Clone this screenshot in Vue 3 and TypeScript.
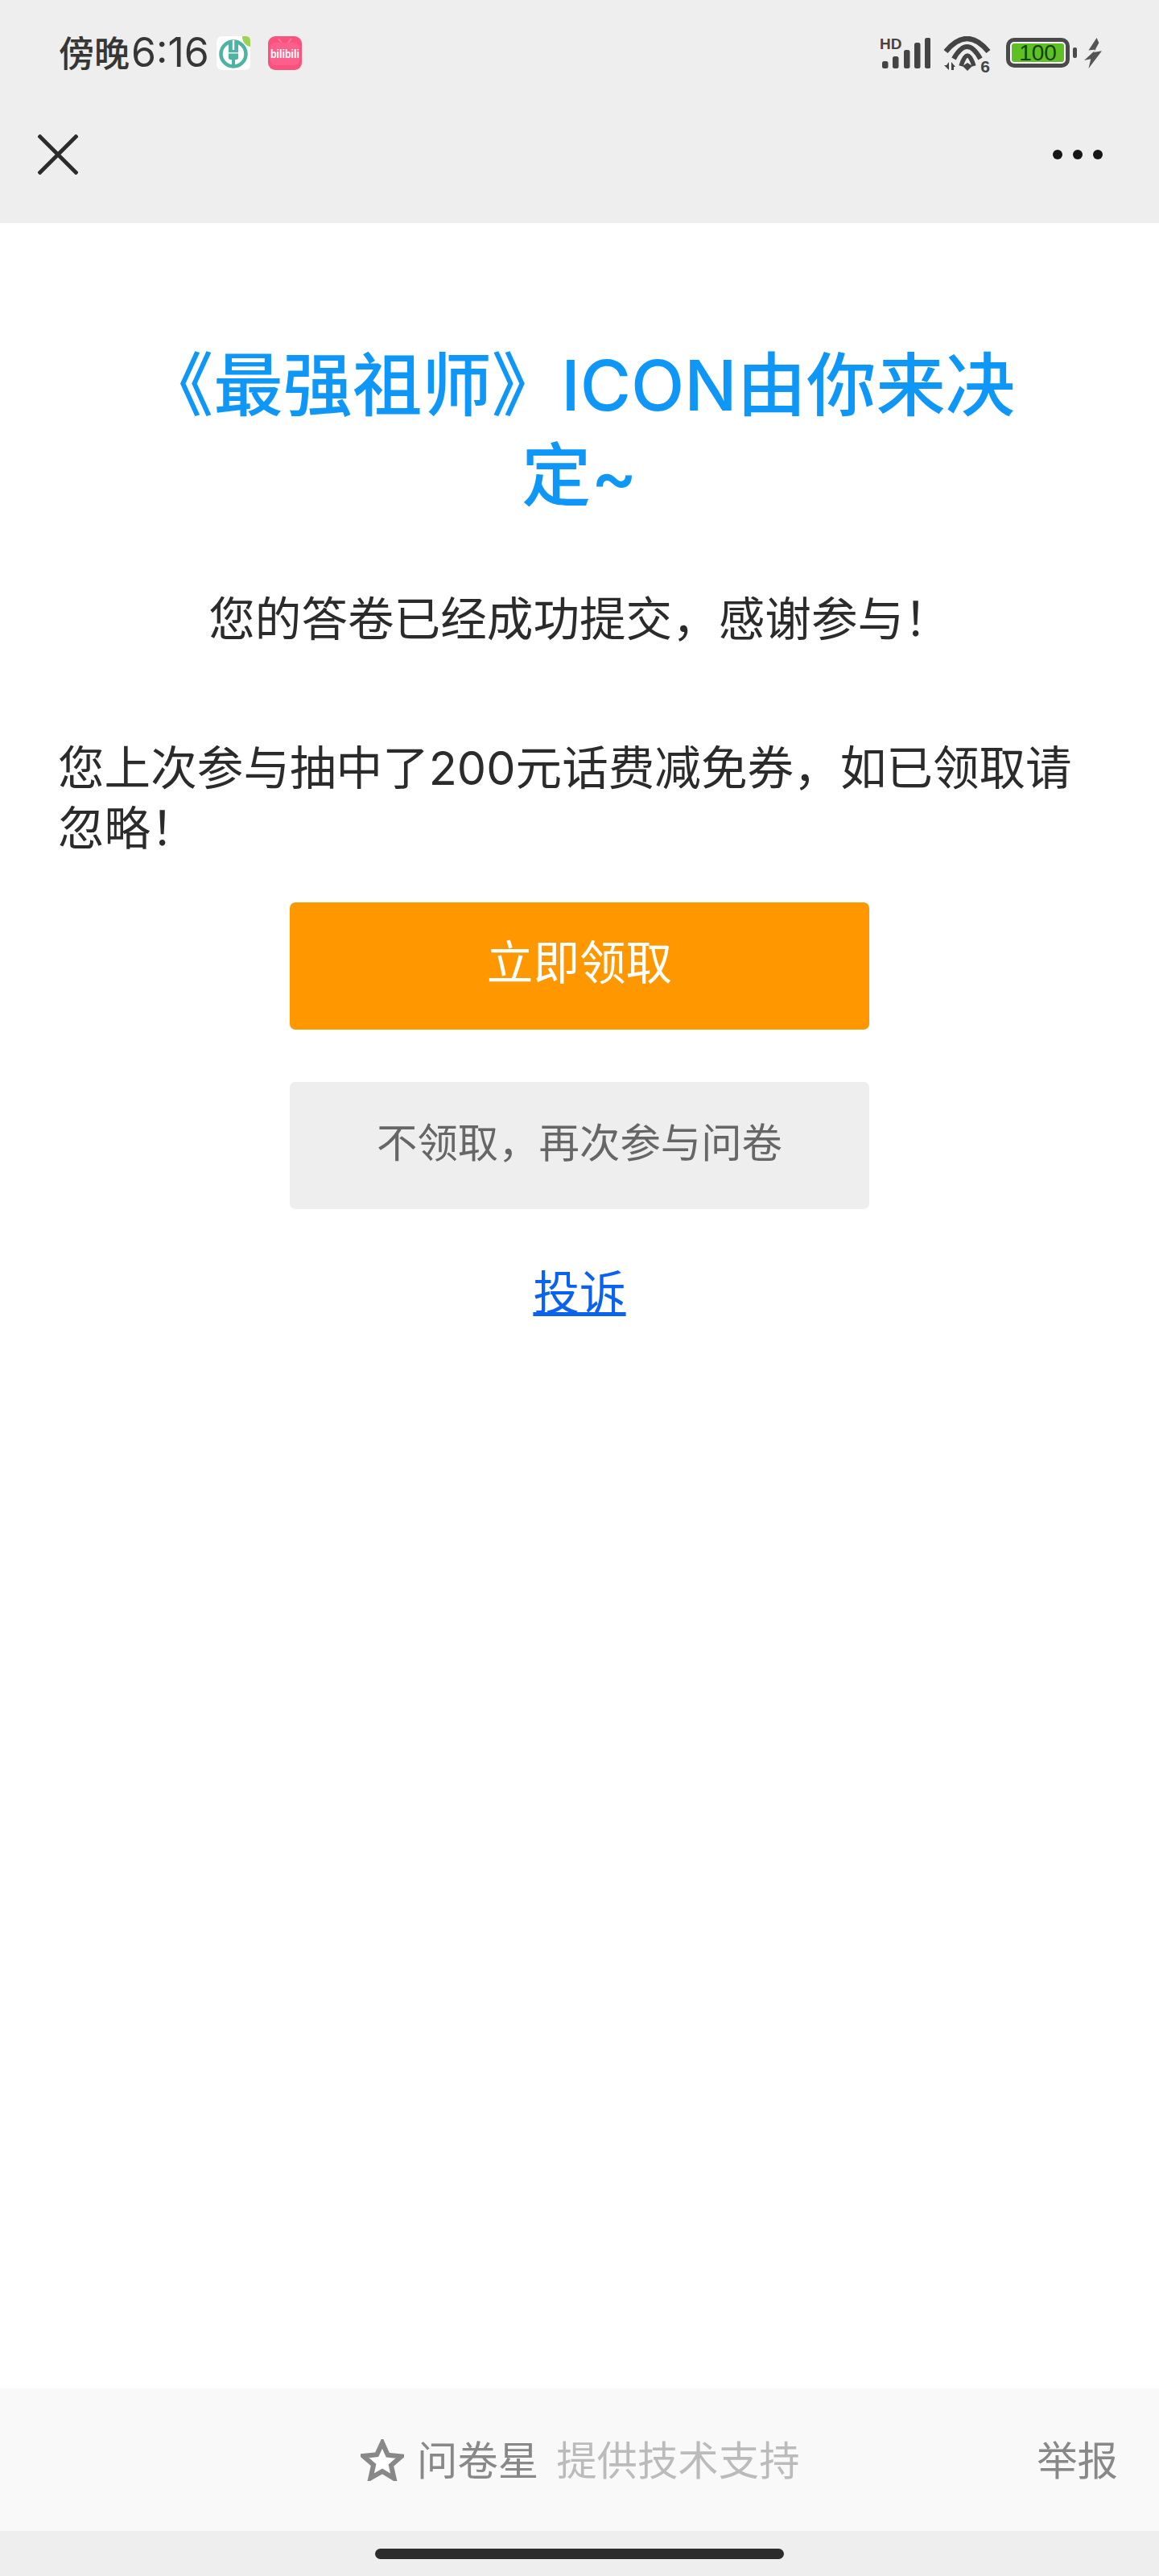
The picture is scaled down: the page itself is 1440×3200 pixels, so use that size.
<script setup lang="ts">
const signalBars: { x: number; h: number }[] = [
  { x: 3, h: 9 },
  { x: 16, h: 15 },
  { x: 30, h: 23 },
  { x: 43, h: 32 },
  { x: 56, h: 38 },
];
</script>

<template>
  <div class="page">
    <header class="top">
      <div class="status">
        <div class="status-left">
          <span class="time">傍晚<span class="clock">6:16</span></span>
          <svg class="app-icon" viewBox="0 0 42 42" aria-hidden="true">
            <rect width="42" height="42" rx="7" fill="#fff" />
            <circle cx="21" cy="22" r="15.5" fill="none" stroke="#4fb3a3" stroke-width="4.5" />
            <rect x="15" y="5" width="12" height="24" rx="2" fill="#4fb3a3" />
            <rect x="19.8" y="5" width="2.4" height="12" fill="#fff" />
            <rect x="15" y="20" width="12" height="1.6" fill="#d6efe9" />
            <rect x="19" y="29" width="4" height="10" fill="#4fb3a3" />
            <path d="M32 0h4c4 0 6 2 6 6v7C36 12 32 7 32 0z" fill="#9cd356" />
          </svg>
          <svg class="app-icon bili" viewBox="0 0 42 42" aria-hidden="true">
            <rect width="42" height="42" rx="9" fill="#f9527f" />
            <path d="M13 3l4 5M29 3l-4 5" stroke="#fb7a9d" stroke-width="2" />
            <rect x="3" y="8" width="36" height="28" rx="6" fill="#fb5f8a" />
            <text x="21" y="27" text-anchor="middle" textLength="36" lengthAdjust="spacingAndGlyphs" class="bili-text">bilibili</text>
          </svg>
        </div>
        <div class="status-right">
          <div class="signal">
            <span class="hd">HD</span>
            <svg class="bars" width="63" height="38" viewBox="0 0 63 38" aria-hidden="true">
              <rect v-for="b in signalBars" :key="b.x" :x="b.x" :y="38 - b.h" width="7.5" :height="b.h" rx="2.5" fill="#444" />
            </svg>
          </div>
          <div class="wifi">
            <svg width="59" height="46" viewBox="0 0 59 46" aria-hidden="true">
              <path d="M3 19Q29.500 -13 56 19" fill="none" stroke="#444" stroke-width="6.500" />
              <path d="M13 28Q29.500 -2 46 28" fill="none" stroke="#444" stroke-width="6" />
              <path d="M22 37Q30 11 38 37" fill="none" stroke="#444" stroke-width="5.500" />
              <path d="M24 37l6-4 6 4-6 6z" fill="#444" />
              <path d="M7 32v10L1 36h3zM10 42V32l5 6h-2v4z" fill="#444" />
            </svg>
            <span class="wifi-six">6</span>
          </div>
          <div class="battery">
            <div class="battery-body"><span class="battery-fill">100</span></div>
            <span class="battery-nub"></span>
          </div>
          <svg class="bolt" width="22" height="38" viewBox="0 0 24 42" preserveAspectRatio="none" aria-hidden="true">
            <path d="M17 0L6 17l10-1L0 31l9-2-3 13 18-24-11 2 7-13z" fill="#555" />
          </svg>
        </div>
      </div>
      <nav class="nav">
        <svg class="close" width="50" height="50" viewBox="0 0 50 50" aria-hidden="true">
          <path d="M1 1l48 48M49 1L1 49" stroke="#2c2c2c" stroke-width="4.800" fill="none" />
        </svg>
        <div class="dots" aria-hidden="true"><i></i><i></i><i></i></div>
      </nav>
    </header>

    <main class="main">
      <h1 class="title">《最强祖师》ICON由你来决定~</h1>
      <p class="thanks">您的答卷已经成功提交，感谢参与！</p>
      <p class="notice">您上次参与抽中了200元话费减免券，如已领取请忽略！</p>
      <button class="btn primary" type="button">立即领取</button>
      <button class="btn secondary" type="button">不领取，再次参与问卷</button>
      <a class="complain" href="#">投诉</a>
    </main>

    <footer class="footer">
      <div class="brand">
        <svg class="star" width="54" height="52" viewBox="0 0 54 52" aria-hidden="true">
          <path d="M27 4.500l6.800 15.300 16.700 1.700-12.600 11 3.700 16.300L27 40 12.400 48.300l3.700-16.300-12.600-11 16.700-1.700z" fill="#fff" stroke="#888" stroke-width="6" stroke-linejoin="miter" />
        </svg>
        <span class="brand-name">问卷星</span>
        <span class="brand-note">提供技术支持</span>
      </div>
      <span class="report">举报</span>
    </footer>
    <div class="home-area"><span class="home-bar"></span></div>
  </div>
</template>

<style>
html,
body {
  margin: 0;
  background: #fff;
}
</style>

<style scoped>
.page {
  width: 1440px;
  height: 3200px;
  display: flex;
  flex-direction: column;
  background: #fff;
  font-family: Inter, "Noto Sans CJK SC", "Noto Sans", sans-serif;
  overflow: hidden;
}

.top {
  height: 277px;
  background: #eeeeee;
  flex: none;
  display: flex;
  flex-direction: column;
}

.status {
  height: 107px;
  padding: 45px 71px 0 73px;
  box-sizing: border-box;
  display: flex;
  justify-content: space-between;
  align-items: flex-start;
}

.status-left {
  display: flex;
  align-items: center;
  height: 42px;
}

.time {
  font-size: 44px;
  font-weight: 500;
  line-height: 42px;
  color: #363636;
  width: 196px;
  white-space: nowrap;
}

.clock {
  font-size: 50px;
  font-weight: 400;
  margin-left: 2px;
}

.app-icon {
  width: 42px;
  height: 42px;
  display: block;
}

.bili {
  margin-left: 22px;
}

.bili-text {
  font-family: "Liberation Sans", sans-serif;
  font-size: 14px;
  font-weight: 700;
  fill: #fff;
}

.status-right {
  display: flex;
  align-items: flex-start;
}

.signal {
  position: relative;
  width: 63px;
  height: 40px;
  margin-right: 16px;
}

.hd {
  position: absolute;
  left: 0;
  top: 0;
  font-family: "Liberation Sans", sans-serif;
  font-size: 19px;
  line-height: 20px;
  font-weight: 700;
  color: #444;
}

.bars {
  position: absolute;
  right: 0;
  bottom: 0;
}

.wifi {
  position: relative;
  flex: none;
  width: 59px;
  height: 46px;
  margin-right: 19px;
}

.wifi svg {
  display: block;
}

.wifi-six {
  position: absolute;
  right: 1px;
  bottom: -1px;
  font-family: "Liberation Sans", sans-serif;
  font-size: 21px;
  line-height: 18px;
  font-weight: 700;
  color: #444;
}

.battery {
  display: flex;
  align-items: center;
  margin-top: 2px;
}

.battery-body {
  width: 79px;
  height: 37px;
  box-sizing: border-box;
  border: 5px solid #4a4a4a;
  border-radius: 10px;
  background: #fff;
  padding: 2px;
}

.battery-fill {
  display: block;
  height: 23px;
  border-radius: 3px;
  background: #5ec024;
  color: #14400a;
  font-family: "Liberation Sans", sans-serif;
  font-size: 28px;
  line-height: 24px;
  text-align: center;
}

.battery-nub {
  width: 5px;
  height: 13px;
  margin-left: 4px;
  border-radius: 2px;
  background: #4a4a4a;
}

.bolt {
  margin-left: 9px;
  margin-top: 2px;
  display: block;
}

.nav {
  flex: 1;
  padding: 0 70px 0 47px;
  display: flex;
  align-items: center;
  justify-content: space-between;
}

.close {
  display: block;
  margin-top: -1px;
}

.dots {
  display: flex;
  gap: 13px;
}

.dots i {
  width: 12px;
  height: 12px;
  border-radius: 50%;
  background: #161616;
  display: block;
}

.main {
  flex: 1;
  display: flex;
  flex-direction: column;
  align-items: center;
  padding-top: 146px;
  box-sizing: border-box;
}

.title {
  margin: 0;
  padding: 0 144px;
  font-size: 86.4px;
  line-height: 112.4px;
  font-weight: 500;
  color: #0f97f8;
  text-align: center;
}

.thanks,
.notice {
  margin: 0;
  font-size: 57.6px;
  line-height: 75px;
  color: #2b2b2b;
}

.thanks {
  margin-top: 84px;
  text-align: center;
}

.notice {
  margin-top: 110px;
  padding: 0 72px;
  align-self: stretch;
}

.btn {
  width: 720px;
  height: 158px;
  flex: none;
  border: 0;
  border-radius: 7px;
  font-family: inherit;
  padding: 0;
}

.primary {
  margin-top: 54px;
  padding-bottom: 16px;
  background: #ff9800;
  color: #fff;
  font-size: 57.6px;
}

.secondary {
  margin-top: 65px;
  padding-bottom: 12px;
  background: #eeeeee;
  color: #666;
  font-size: 50.4px;
}

.complain {
  margin-top: 67px;
  font-size: 57.6px;
  line-height: 75px;
  color: #0a62ee;
  text-decoration: underline;
}

.footer {
  height: 177px;
  flex: none;
  background: #f9f9f9;
  display: flex;
  align-items: center;
  padding: 0 51px 0 448px;
  box-sizing: border-box;
  justify-content: space-between;
}

.brand {
  display: flex;
  align-items: center;
  font-size: 50.4px;
  line-height: 60px;
}

.star {
  display: block;
  margin-right: 16px;
}

.brand-name {
  color: #888;
  margin-right: 22px;
  padding-top: 3px;
}

.brand-note {
  color: #bbb;
  padding-top: 3px;
}

.report {
  font-size: 50.4px;
  line-height: 60px;
  color: #888;
  padding-top: 3px;
}

.home-area {
  height: 56px;
  flex: none;
  background: #eeeeee;
  display: flex;
  justify-content: center;
  padding-top: 22px;
  box-sizing: border-box;
}

.home-bar {
  display: block;
  width: 508px;
  height: 13px;
  border-radius: 7px;
  background: #2c2c2c;
}
</style>
